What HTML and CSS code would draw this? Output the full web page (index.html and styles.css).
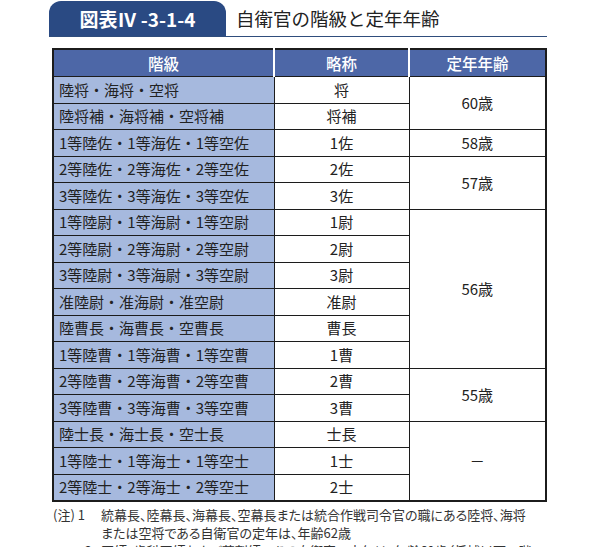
FILE: index.html
```html
<!DOCTYPE html>
<html lang="ja">
<head>
<meta charset="utf-8">
<link rel="stylesheet" href="styles.css">
</head>
<body>
<div class="page">
  <div class="head">
    <div class="tab">図表Ⅳ -3-1-4</div>
    <div class="title">自衛官の階級と定年年齢</div>
  </div>
  <table class="ranks">
    <colgroup><col class="c1"><col class="c2"><col class="c3"></colgroup>
    <thead>
      <tr><th>階級</th><th>略称</th><th>定年年齢</th></tr>
    </thead>
    <tbody>
      <tr><td class="rank">陸将・海将・空将</td><td class="abbr">将</td><td class="age" rowspan="2">60歳</td></tr>
      <tr><td class="rank">陸将補・海将補・空将補</td><td class="abbr">将補</td></tr>
      <tr><td class="rank">1等陸佐・1等海佐・1等空佐</td><td class="abbr">1佐</td><td class="age">58歳</td></tr>
      <tr><td class="rank">2等陸佐・2等海佐・2等空佐</td><td class="abbr">2佐</td><td class="age" rowspan="2">57歳</td></tr>
      <tr><td class="rank">3等陸佐・3等海佐・3等空佐</td><td class="abbr">3佐</td></tr>
      <tr><td class="rank">1等陸尉・1等海尉・1等空尉</td><td class="abbr">1尉</td><td class="age" rowspan="6">56歳</td></tr>
      <tr><td class="rank">2等陸尉・2等海尉・2等空尉</td><td class="abbr">2尉</td></tr>
      <tr><td class="rank">3等陸尉・3等海尉・3等空尉</td><td class="abbr">3尉</td></tr>
      <tr><td class="rank">准陸尉・准海尉・准空尉</td><td class="abbr">准尉</td></tr>
      <tr><td class="rank">陸曹長・海曹長・空曹長</td><td class="abbr">曹長</td></tr>
      <tr><td class="rank">1等陸曹・1等海曹・1等空曹</td><td class="abbr">1曹</td></tr>
      <tr><td class="rank">2等陸曹・2等海曹・2等空曹</td><td class="abbr">2曹</td><td class="age" rowspan="2">55歳</td></tr>
      <tr><td class="rank">3等陸曹・3等海曹・3等空曹</td><td class="abbr">3曹</td></tr>
      <tr><td class="rank">陸士長・海士長・空士長</td><td class="abbr">士長</td><td class="age" rowspan="3">－</td></tr>
      <tr><td class="rank">1等陸士・1等海士・1等空士</td><td class="abbr">1士</td></tr>
      <tr><td class="rank">2等陸士・2等海士・2等空士</td><td class="abbr">2士</td></tr>
    </tbody>
  </table>
  <div class="notes">
    <div class="note"><span class="lbl">(注) 1</span><span class="txt">統幕長、陸幕長、海幕長、空幕長または統合作戦司令官の職にある陸将、海将または空将である自衛官の定年は、年齢62歳</span></div>
    <div class="note"><span class="lbl lbl2">2</span><span class="txt">医師、歯科医師および薬剤師である自衛官の定年は、年齢60歳（将補以下の階級）</span></div>
  </div>
</div>
</body>
</html>
```

FILE: styles.css
```css
html, body {
  margin: 0;
  padding: 0;
  background: #ffffff;
}
body {
  font-family: "Noto Sans CJK JP", "Noto Sans", sans-serif;
  color: #222222;
  height: 547px;
  overflow: hidden;
}
.page {
  padding-top: 1px;
  margin-left: 49px;
  width: 498px;
}
.head {
  display: flex;
  align-items: flex-end;
  border-bottom: 1.5px solid #2f4d7c;
  height: 35px;
}
.tab {
  width: 177px;
  height: 35px;
  box-sizing: border-box;
  background: #2a4a83;
  color: #ffffff;
  border-radius: 12px 12px 0 0;
  font-size: 19px;
  font-weight: 700;
  line-height: 35px;
  text-align: center;
}
.title {
  margin-left: 10px;
  font-size: 18.5px;
  line-height: 35px;
  color: #222222;
}
.ranks {
  margin-top: 11px;
  margin-left: 3px;
  width: 493px;
  border-collapse: collapse;
  table-layout: fixed;
  border: 2px solid #1c1c1c;
  font-size: 15px;
}
.c1 { width: 221px; }
.c2 { width: 135px; }
.c3 { width: 137px; }
.ranks th {
  background: #4d67a7;
  color: #ffffff;
  font-weight: 500;
  font-size: 15.5px;
  height: 26px;
  padding: 0;
  border-left: 2px solid #ffffff;
  border-bottom: 1px solid #1c1c1c;
  line-height: 18px;
}
.ranks th:first-child {
  border-left: 2px solid #1c1c1c;
}
.ranks td {
  height: 25.5px;
  padding: 0;
  border: 1px solid #1c1c1c;
  line-height: 18px;
  vertical-align: middle;
}
.ranks td.rank {
  background: #a6b9de;
  padding-left: 5px;
  white-space: nowrap;
}
.ranks td.abbr {
  text-align: center;
}
.ranks td.age {
  text-align: center;
}
.notes {
  margin-top: 4px;
  margin-left: 4px;
  font-size: 13px;
  line-height: 18px;
  color: #333333;
}
.note {
  display: flex;
}
.lbl {
  flex: 0 0 48px;
  white-space: nowrap;
}
.lbl2 {
  text-align: right;
  box-sizing: border-box;
  padding-right: 9px;
}
.txt {
  flex: 0 0 432px;
  font-feature-settings: "palt";
}
```
